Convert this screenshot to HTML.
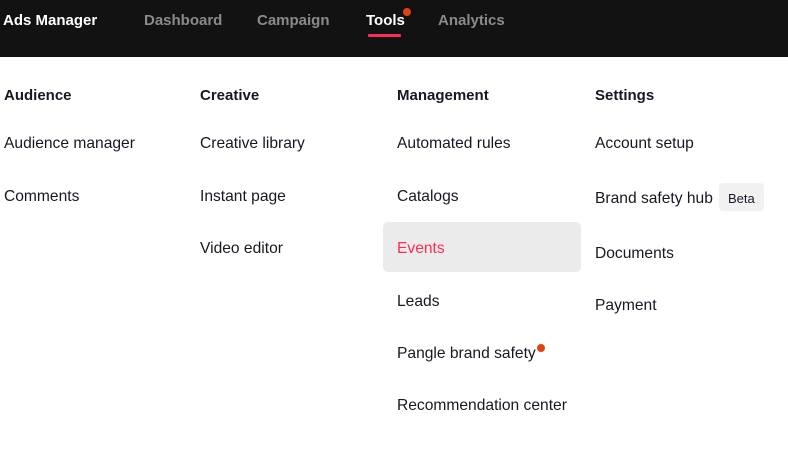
<!DOCTYPE html>
<html><head><style>
body{margin:0;width:788px;height:451px;background:#fff;font-family:"Liberation Sans",Arial,sans-serif;position:relative;overflow:hidden}
.hd{position:absolute;left:0;top:0;width:788px;height:57px;background:#121212}
.t{position:absolute;white-space:nowrap;font-size:15.6px;line-height:18px;color:#161823}
.n{font-weight:bold;color:#8a8a8a;font-size:15px;top:12px}
.b{font-weight:bold;font-size:15px}
</style></head><body>
<div class="hd"></div>
<div class="t n" style="left:3px;color:#fff">Ads Manager</div>
<div class="t n" style="left:144px">Dashboard</div>
<div class="t n" style="left:257px">Campaign</div>
<div class="t n" style="left:366px;color:#fff">Tools</div>
<div style="position:absolute;left:403px;top:8px;width:8px;height:8px;border-radius:50%;background:#e0430f"></div>
<div style="position:absolute;left:368px;top:34px;width:33px;height:3px;background:#fe2c55;border-radius:1px"></div>
<div class="t n" style="left:438px">Analytics</div>

<div style="position:absolute;left:383px;top:222px;width:198px;height:50px;background:#ebebeb;border-radius:5px"></div>
<div style="position:absolute;left:719px;top:183px;width:45px;height:28px;background:#f1f1f2;border-radius:4px"></div>
<div style="position:absolute;left:537px;top:344px;width:8px;height:8px;border-radius:50%;background:#e0430f"></div>

<div class="t b" style="left:4px;top:87px">Audience</div>
<div class="t" style="left:4px;top:135px">Audience manager</div>
<div class="t" style="left:4px;top:188px">Comments</div>

<div class="t b" style="left:200px;top:87px">Creative</div>
<div class="t" style="left:200px;top:135px">Creative library</div>
<div class="t" style="left:200px;top:188px">Instant page</div>
<div class="t" style="left:200px;top:240px">Video editor</div>

<div class="t b" style="left:397px;top:87px">Management</div>
<div class="t" style="left:397px;top:135px">Automated rules</div>
<div class="t" style="left:397px;top:188px">Catalogs</div>
<div class="t" style="left:397px;top:240px;color:#fe2c55">Events</div>
<div class="t" style="left:397px;top:293px">Leads</div>
<div class="t" style="left:397px;top:345px">Pangle brand safety</div>
<div class="t" style="left:397px;top:397px">Recommendation center</div>

<div class="t b" style="left:595px;top:87px">Settings</div>
<div class="t" style="left:595px;top:135px">Account setup</div>
<div class="t" style="left:595px;top:190px">Brand safety hub</div>
<div class="t" style="left:728px;top:190px;font-size:13px">Beta</div>
<div class="t" style="left:595px;top:245px">Documents</div>
<div class="t" style="left:595px;top:297px">Payment</div>
</body></html>
